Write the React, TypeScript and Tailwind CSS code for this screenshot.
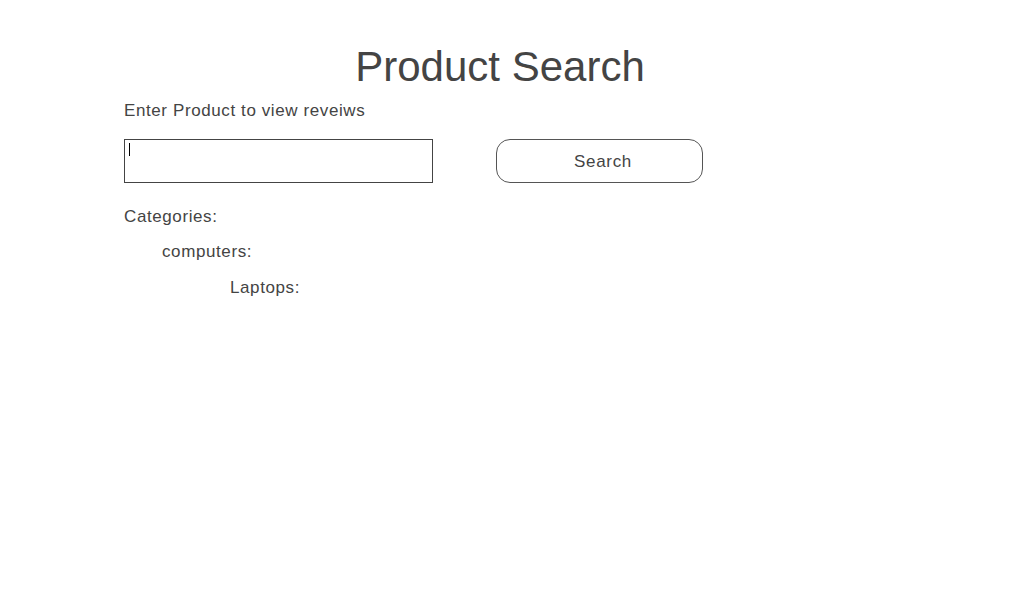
import React from 'react';

const font = { fontFamily: '"Liberation Sans", Arial, sans-serif' };

export default function App() {
  return (
    <div className="min-h-[600px] w-full bg-white text-[#444444]" style={font}>
      <div className="pl-[124px] pt-[41px]">
        {/* Title */}
        <h1 className="w-[752px] text-center text-[42px] leading-[52px] font-normal">Product Search</h1>

        <p className="mt-[8px] text-[17px] leading-[20px] tracking-[0.6px]">Enter Product to view reveiws</p>

        {/* Search row */}
        <div className="mt-[18px] flex items-center gap-[63px]">
          <div className="relative h-[44px] w-[309px] border border-[#444444] bg-white">
            <span className="absolute left-[4px] top-[3px] h-[13px] w-px bg-black" />
          </div>
          <button className="h-[44px] w-[207px] rounded-[14px] border border-[#555555] bg-white pl-[7px] pt-[2px] text-[17px] tracking-[0.7px] text-[#444444]">
            Search
          </button>
        </div>

        {/* Categories */}
        <div className="mt-[24px] text-[17px] leading-[20px] tracking-[0.6px]">
          <div>Categories:</div>
          <div className="mt-[15px] pl-[38px]">computers:</div>
          <div className="mt-[16px] pl-[106px]">Laptops:</div>
        </div>
      </div>
    </div>
  );
}
